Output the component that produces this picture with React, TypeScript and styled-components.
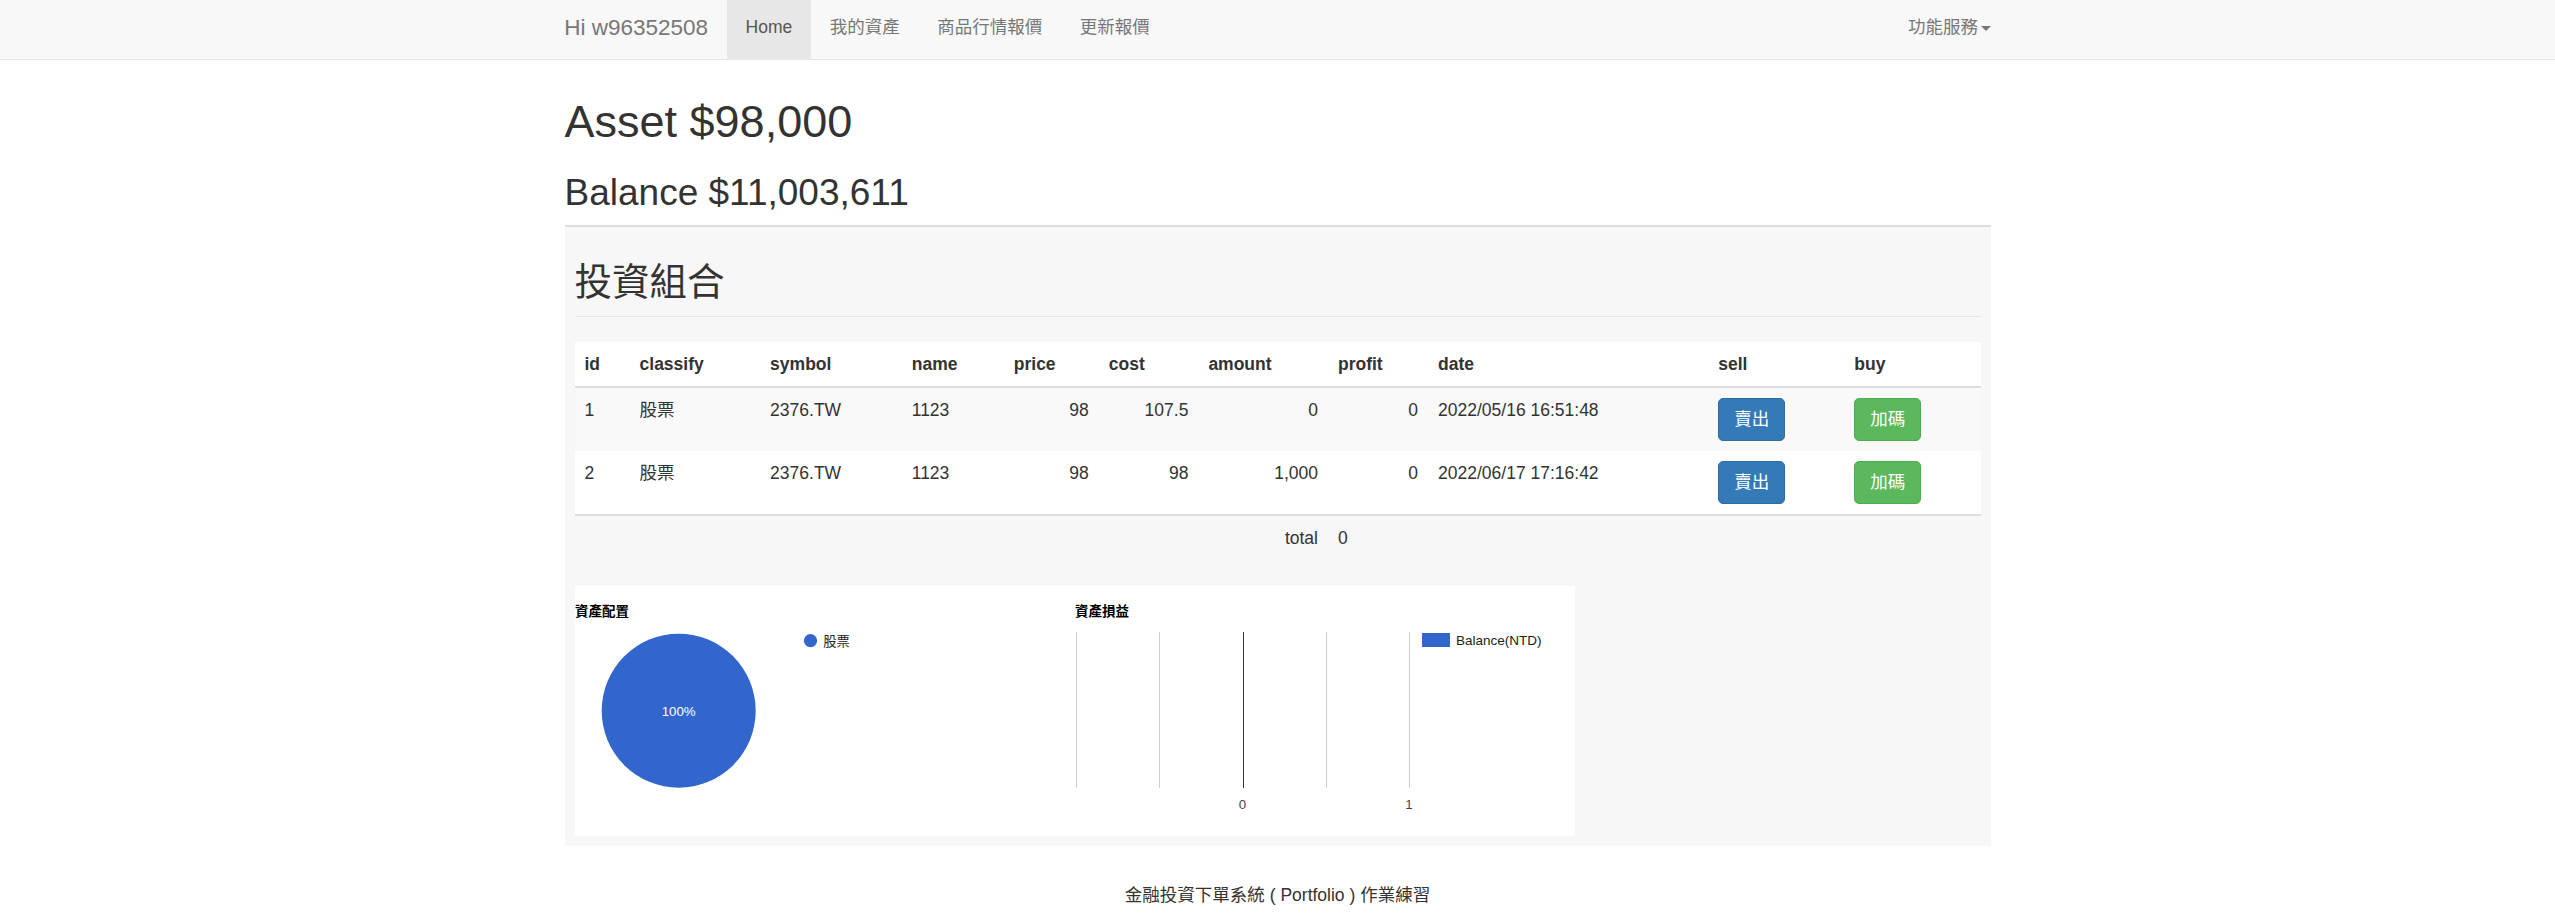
import React from "react";
import styled, { createGlobalStyle } from "styled-components";

const GlobalStyle = createGlobalStyle`
  html, body {
    margin: 0;
    padding: 0;
    background: #ffffff;
  }
  body {
    font-family: "Liberation Sans", "Noto Sans CJK TC", Arial, sans-serif;
    font-size: 17.5px;
    line-height: 25px;
    color: #333333;
  }
  * {
    box-sizing: border-box;
  }
`;

const CHART_FONT = `"Liberation Sans", "Noto Sans CJK TC", Arial, sans-serif`;
const BLUE = "#3366cc";

interface Holding {
  id: number;
  classify: string;
  symbol: string;
  name: string;
  price: string;
  cost: string;
  amount: string;
  profit: string;
  date: string;
}

const holdings: Holding[] = [
  {
    id: 1,
    classify: "股票",
    symbol: "2376.TW",
    name: "1123",
    price: "98",
    cost: "107.5",
    amount: "0",
    profit: "0",
    date: "2022/05/16 16:51:48",
  },
  {
    id: 2,
    classify: "股票",
    symbol: "2376.TW",
    name: "1123",
    price: "98",
    cost: "98",
    amount: "1,000",
    profit: "0",
    date: "2022/06/17 17:16:42",
  },
];

const columnWidths = [55, 130.5, 141.5, 102, 95, 99.5, 129.5, 100, 280, 136, 136];

const navItems = ["Home", "我的資產", "商品行情報價", "更新報價"];

const PieChart = () => (
  <ChartSvg width={500} height={250} viewBox="0 0 500 250">
    <text x={0} y={30} fontFamily={CHART_FONT} fontSize={13.5} fontWeight="bold" fill="#000">
      資產配置
    </text>
    <circle cx={103.7} cy={124.7} r={77} fill={BLUE} />
    <text
      x={103.7}
      y={129.5}
      textAnchor="middle"
      fontFamily={CHART_FONT}
      fontSize={13.3}
      fill="#ffffff"
    >
      100%
    </text>
    <circle cx={235.5} cy={54.7} r={6.6} fill={BLUE} />
    <text x={248.3} y={59.5} fontFamily={CHART_FONT} fontSize={13.3} fill="#222">
      股票
    </text>
  </ChartSvg>
);

const gridXs = [1, 84.2, 167.5, 250.8, 334];

const BarChart = () => (
  <ChartSvg width={500} height={250} viewBox="0 0 500 250">
    <text x={0} y={30} fontFamily={CHART_FONT} fontSize={13.5} fontWeight="bold" fill="#000">
      資產損益
    </text>
    {gridXs.map((x, i) => (
      <rect
        key={x}
        x={Math.round(x)}
        y={46}
        width={1}
        height={156}
        fill={i === 2 ? "#333333" : "#cccccc"}
      />
    ))}
    <text x={167.5} y={223} textAnchor="middle" fontFamily={CHART_FONT} fontSize={13.3} fill="#444">
      0
    </text>
    <text x={334} y={223} textAnchor="middle" fontFamily={CHART_FONT} fontSize={13.3} fill="#444">
      1
    </text>
    <rect x={347} y={47} width={28} height={14} fill={BLUE} />
    <text x={381} y={59} fontFamily={CHART_FONT} fontSize={13.5} fill="#222">
      Balance(NTD)
    </text>
  </ChartSvg>
);

const App = () => {
  return (
    <>
      <GlobalStyle />
      <Navbar>
        <NavInner>
          <Brand>Hi w96352508</Brand>
          <NavList>
            {navItems.map((item, i) => (
              <NavLink key={item} $active={i === 0}>
                {item}
              </NavLink>
            ))}
          </NavList>
          <RightNav>
            <NavLink>
              功能服務
              <Caret />
            </NavLink>
          </RightNav>
        </NavInner>
      </Navbar>

      <Container>
        <AssetTitle>Asset $98,000</AssetTitle>
        <BalanceTitle>Balance $11,003,611</BalanceTitle>

        <PortfolioPanel>
          <PageHeader>投資組合</PageHeader>

          <Table>
            <colgroup>
              {columnWidths.map((w, i) => (
                <col key={i} style={{ width: w }} />
              ))}
            </colgroup>
            <thead>
              <tr>
                <Th>id</Th>
                <Th>classify</Th>
                <Th>symbol</Th>
                <Th>name</Th>
                <Th>price</Th>
                <Th>cost</Th>
                <Th>amount</Th>
                <Th>profit</Th>
                <Th>date</Th>
                <Th>sell</Th>
                <Th>buy</Th>
              </tr>
            </thead>
            <tbody>
              {holdings.map((h, i) => (
                <Row key={h.id} $striped={i % 2 === 0}>
                  <Td>{h.id}</Td>
                  <Td>{h.classify}</Td>
                  <Td>{h.symbol}</Td>
                  <Td>{h.name}</Td>
                  <Td $right>{h.price}</Td>
                  <Td $right>{h.cost}</Td>
                  <Td $right>{h.amount}</Td>
                  <Td $right>{h.profit}</Td>
                  <Td>{h.date}</Td>
                  <Td>
                    <Button $variant="primary">賣出</Button>
                  </Td>
                  <Td>
                    <Button $variant="success">加碼</Button>
                  </Td>
                </Row>
              ))}
            </tbody>
            <TotalBody>
              <tr>
                <TotalCell />
                <TotalCell />
                <TotalCell />
                <TotalCell />
                <TotalCell />
                <TotalCell />
                <TotalCell $right>total</TotalCell>
                <TotalCell>0</TotalCell>
                <TotalCell />
                <TotalCell />
                <TotalCell />
              </tr>
            </TotalBody>
          </Table>

          <ChartsRow>
            <PieChart />
            <BarChart />
          </ChartsRow>
        </PortfolioPanel>
      </Container>

      <Footer>金融投資下單系統 ( Portfolio ) 作業練習</Footer>
    </>
  );
};

export default App;

const Navbar = styled.nav`
  background: #f8f8f8;
  border-bottom: 1px solid #e7e7e7;
  height: 60px;
`;

const NavInner = styled.div`
  width: 1426px;
  margin: 0 auto;
  height: 59px;
  display: flex;
  align-items: stretch;
`;

const Brand = styled.a`
  margin-left: -19px;
  padding: 15px 18.75px 0;
  font-size: 22.5px;
  line-height: 25px;
  color: #777777;
`;

const NavList = styled.ul`
  list-style: none;
  margin: 0;
  padding: 0;
  display: flex;
`;

const NavLink = styled.li<{ $active?: boolean }>`
  padding: 15px 18.75px 0;
  line-height: 25px;
  font-size: 17.5px;
  color: ${({ $active }) => ($active ? "#555555" : "#777777")};
  background: ${({ $active }) => ($active ? "#e7e7e7" : "transparent")};
  display: flex;
  align-items: flex-start;
`;

const RightNav = styled.ul`
  list-style: none;
  margin: 0 -18.75px 0 auto;
  padding: 0;
  display: flex;
`;

const Caret = styled.span`
  display: inline-block;
  width: 0;
  height: 0;
  margin: 11px 0 0 2.5px;
  border-top: 5px solid #777777;
  border-left: 5px solid transparent;
  border-right: 5px solid transparent;
`;

const Container = styled.main`
  width: 1426px;
  margin: 0 auto;
`;

const AssetTitle = styled.h1`
  margin: 37px 0 12.5px;
  font-size: 45px;
  line-height: 49.5px;
  font-weight: 500;
  color: #333333;
`;

const BalanceTitle = styled.h2`
  margin: 26px 0 12px;
  font-size: 37px;
  line-height: 40px;
  font-weight: 500;
  color: #333333;
`;

const PortfolioPanel = styled.section`
  background: #f7f7f7;
  border-top: 2px solid #dddddd;
  padding: 10px 10px 10px;
`;

const PageHeader = styled.h2`
  margin: 25px 0 25px;
  padding: 0 0 13px;
  border-bottom: 1px solid #e6e6e6;
  font-size: 37.5px;
  line-height: 41.25px;
  font-weight: 400;
  color: #333333;
`;

const Table = styled.table`
  width: 100%;
  table-layout: fixed;
  border-collapse: collapse;
  border-spacing: 0;
  margin-bottom: 25px;
`;

const Th = styled.th`
  background: #ffffff;
  text-align: left;
  font-weight: bold;
  padding: 10px;
  line-height: 24px;
  border-bottom: 2px solid #dddddd;
  white-space: nowrap;
`;

const Row = styled.tr<{ $striped?: boolean }>`
  background: ${({ $striped }) => ($striped ? "#f9f9f9" : "#ffffff")};
  & + & td {
    border-top: 1px solid #dddddd;
  }
`;

const Td = styled.td<{ $right?: boolean }>`
  padding: 10px;
  line-height: 25px;
  vertical-align: top;
  text-align: ${({ $right }) => ($right ? "right" : "left")};
  white-space: nowrap;
`;

const TotalBody = styled.tbody`
  border-top: 2px solid #dddddd;
`;

const TotalCell = styled.td<{ $right?: boolean }>`
  padding: 10px;
  line-height: 25px;
  height: 45px;
  text-align: ${({ $right }) => ($right ? "right" : "left")};
`;

const Button = styled.button<{ $variant: "primary" | "success" }>`
  display: inline-block;
  height: 43px;
  padding: 0 15px;
  font-family: "Liberation Sans", "Noto Sans CJK TC", Arial, sans-serif;
  font-size: 17.5px;
  line-height: 25px;
  color: #ffffff;
  border-radius: 5px;
  cursor: pointer;
  background: ${({ $variant }) => ($variant === "primary" ? "#337ab7" : "#5cb85c")};
  border: 1px solid ${({ $variant }) => ($variant === "primary" ? "#2e6da4" : "#4cae4c")};
`;

const ChartsRow = styled.div`
  display: flex;
  width: 1000px;
  height: 250px;
  background: #ffffff;
`;

const ChartSvg = styled.svg`
  display: block;
  flex: none;
`;

const Footer = styled.footer`
  text-align: center;
  padding: 37px 0 30px;
  line-height: 25px;
  color: #333333;
`;
